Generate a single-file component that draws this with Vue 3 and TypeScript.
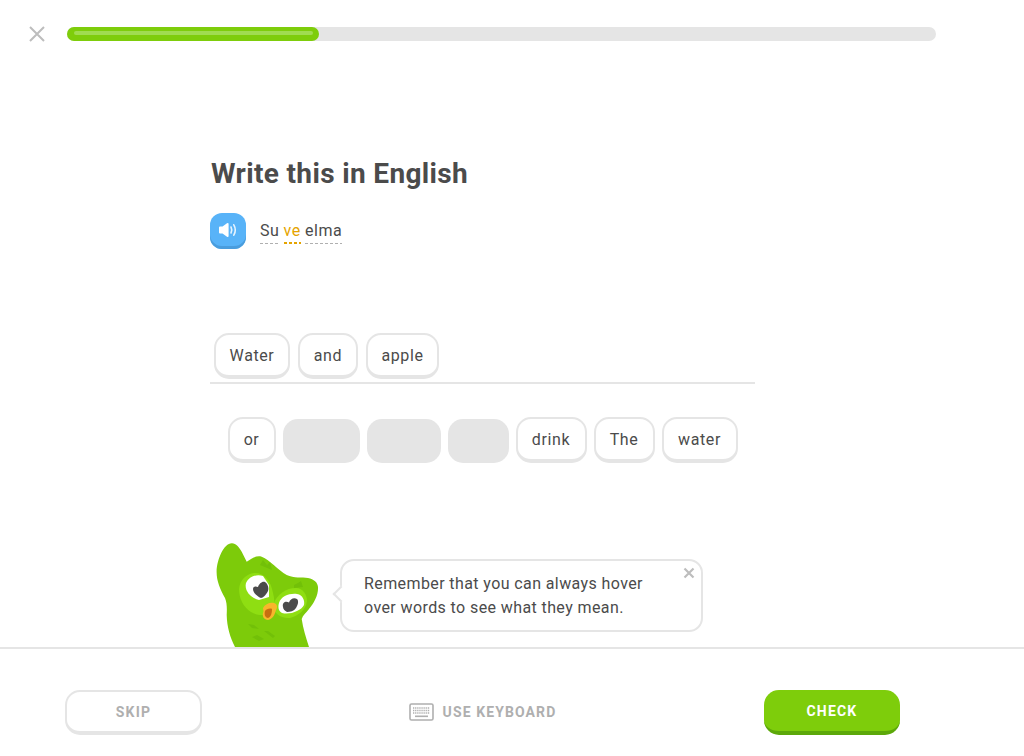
<script setup lang="ts">
interface Word {
  text: string
  width: number
  used?: boolean
}

const answer: Word[] = [
  { text: 'Water', width: 76 },
  { text: 'and', width: 60 },
  { text: 'apple', width: 73 },
]

const bank: Word[] = [
  { text: 'or', width: 48 },
  { text: '', width: 77, used: true },
  { text: '', width: 74, used: true },
  { text: '', width: 61, used: true },
  { text: 'drink', width: 71 },
  { text: 'The', width: 61 },
  { text: 'water', width: 76 },
]
</script>

<template>
  <div class="page">
    <header class="top">
      <svg class="quit" width="16" height="16" viewBox="0 0 16 16">
        <path d="M1 1l14 14M15 1L1 15" stroke="#bdbdbd" stroke-width="2" fill="none" />
      </svg>
      <div class="progress">
        <div class="progress-fill"><span class="progress-shine"></span></div>
      </div>
    </header>

    <main class="lesson">
      <h1 class="title">Write this in English</h1>

      <div class="prompt">
        <button class="speaker">
          <svg width="20" height="16" viewBox="0 0 20 16">
            <path d="M1 5.500q0-1 1-1h2.500L9 1.200q1.600-.9 1.600 1v11.600q0 1.900-1.600 1L4.500 11.500H2q-1 0-1-1z" fill="#fff" />
            <path d="M13 5q1.600 3 0 6M15.800 2.800q3 5.200 0 10.400" stroke="#fff" stroke-width="1.600" stroke-linecap="round" fill="none" opacity=".85" />
          </svg>
        </button>
        <div class="sentence">
          <span class="hint">Su</span>
          <span class="hint new">ve</span>
          <span class="hint">elma</span>
        </div>
      </div>

      <div class="answer">
        <span v-for="w in answer" :key="w.text" class="token" :style="{ width: w.width + 'px' }">{{ w.text }}</span>
      </div>

      <div class="bank">
        <template v-for="(w, i) in bank" :key="i">
          <span v-if="w.used" class="token-empty" :style="{ width: w.width + 'px' }"></span>
          <span v-else class="token" :style="{ width: w.width + 'px' }">{{ w.text }}</span>
        </template>
      </div>

      <div class="tip">
        <svg class="owl" width="103" height="104" viewBox="0 0 103 104">
          <path d="M16 .3C20 .5 23 4 25.700 8.700L30.700 18.700C36 15 41 12 45.700 13.700C54 17 62 27 70.700 32C78 35.500 86 34 92 35C98 36.500 101.500 39 102 44C102.500 52 98 60 93 66C90 70 87 72 85.700 76C87 85 90 95 93 104H19C14 94 11 84 10.700 72C11 65 11 60 9 55C4 46 .5 38 .6 28.700C1 16 8 0 16 .3Z" fill="#7dcb0a" />
          <path d="M44 22l3-5 4 5 3-3 2 8zM78 42l4-2 3-2 2 6-9 1z" fill="#72c008" />
          <path d="M23 46C24 37 30 31 38 30C47 29 55 37 57 50C59 58 59 65 55 69C50 73 42 73 35 69C27 64 23 55 23 46Z" fill="#8fde12" />
          <path d="M57 62C61 51 70 45 80 45C87 45 91 52 91 58C90 67 82 73 74 75C65 76 57 70 57 62Z" fill="#8fde12" />
          <path d="M30 40C33 33 41 31 47 33L53 42V54L43 57C35 55 28 48 30 40Z" fill="#fff" />
          <path d="M63 60C65 53 74 50 81 51C87 52 89 58 88 62C85 68 74 72 66 70C62 68 62 63 63 60Z" fill="#fff" />
          <path d="M37 46C37 43 40 43 42 44C43 41 46 38 49 39C52 41 53 45 52 48C50 52 47 55 45 55C42 54 37 50 37 46Z" fill="#4b4b4b" />
          <path d="M67 64C66 59 70 58 73 59.500C74 56 78 54 81 56C83 58 82 62 80 65C78 68 74 69 71 69C69 68 67 66 67 64Z" fill="#4b4b4b" />
          <path d="M47 65C49 61 54 59 58 60C61 61 62 64 60 67C59 71 57 76 52 77C48 77 46 73 47 70C48 68 47 67 47 65Z" fill="#f8b62c" />
          <path d="M49 68C50 66 54 65 56 66C56 70 55 74 52 75C49 75 48 71 49 68Z" fill="#c76f10" />
          <path d="M32 81l6 1 5 4-7-1zM36 94l5-2 7 4-5 2zM48 88l4 0 7 5-2 2z" fill="#72c008" />
        </svg>

        <div class="bubble">
          <span class="bubble-arrow"></span>
          <p>Remember that you can always hover<br />over words to see what they mean.</p>
          <svg class="bubble-close" width="12" height="12" viewBox="0 0 12 12">
            <path d="M1.500 1.500l9 9M10.500 1.500l-9 9" stroke="#bdbdbd" stroke-width="2.200" fill="none" />
          </svg>
        </div>
      </div>
    </main>

    <footer class="footer">
      <button class="btn skip">SKIP</button>
      <div class="keyboard">
        <svg width="25" height="18" viewBox="0 0 25 18">
          <rect x="1" y="1" width="23" height="16" rx="1.500" fill="none" stroke="#afafaf" stroke-width="1.600" />
          <path d="M4 5h17M4 7.500h17M4 10h17" stroke="#afafaf" stroke-width="1.400" stroke-dasharray="1.300 .8" fill="none" />
          <path d="M6 13.300h13" stroke="#afafaf" stroke-width="1.600" fill="none" />
        </svg>
        <span>USE KEYBOARD</span>
      </div>
      <button class="btn check">CHECK</button>
    </footer>
  </div>
</template>

<style>
body {
  background: #fff;
}
</style>

<style scoped>
.page {
  height: 756px;
  display: flex;
  flex-direction: column;
  font-family: Roboto, 'Noto Sans', sans-serif;
  color: #4b4b4b;
  overflow: hidden;
}

.top {
  display: flex;
  align-items: center;
  gap: 22px;
  padding: 26px 88px 0 29px;
}

.quit {
  flex: none;
}

.progress {
  flex: 1;
  height: 14px;
  border-radius: 7px;
  background: #e5e5e5;
}

.progress-fill {
  width: 252px;
  height: 14px;
  border-radius: 7px;
  background: #7ecd0b;
  padding: 4px 6px 0 7px;
  box-sizing: border-box;
}

.progress-shine {
  display: block;
  height: 4px;
  border-radius: 2px;
  background: #a0dc50;
}

.lesson {
  flex: 1;
  min-height: 0;
  width: 545px;
  margin-left: 210px;
}

.title {
  margin: 114px 0 0 1px;
  font-size: 28px;
  line-height: 36px;
  font-weight: 700;
  letter-spacing: 0.35px;
}

.prompt {
  display: flex;
  align-items: center;
  gap: 14px;
  margin-top: 21px;
}

.speaker {
  width: 36px;
  height: 36px;
  padding: 0 0 3px;
  border: 0;
  border-radius: 12px;
  background: #58b3f8;
  box-shadow: inset 0 -3px 0 #4a9ddd;
  display: flex;
  align-items: center;
  justify-content: center;
}

.sentence {
  display: flex;
  gap: 4px;
  font-size: 16px;
  letter-spacing: 0.6px;
}

.hint {
  line-height: 22px;
  padding: 2px 0 2px;
  background: repeating-linear-gradient(90deg, #afafaf 0 3px, transparent 3px 5px) left bottom / 100% 1px no-repeat;
}

.new {
  color: #e5a400;
  background: repeating-linear-gradient(90deg, #e5a400 0 3px, transparent 3px 5px) left bottom / 100% 2px no-repeat;
}

.answer {
  display: flex;
  gap: 8px;
  height: 49px;
  margin-top: 84px;
  padding-left: 4px;
  border-bottom: 2px solid #e5e5e5;
}

.bank {
  display: flex;
  justify-content: center;
  gap: 7px;
  height: 46px;
  margin-top: 33px;
}

.token,
.token-empty {
  box-sizing: border-box;
  height: 46px;
  border-radius: 15px;
  flex: none;
}

.token {
  display: flex;
  align-items: center;
  justify-content: center;
  border: 2px solid #e5e5e5;
  border-bottom-width: 4px;
  font-size: 16px;
  letter-spacing: 0.6px;
  background: #fff;
}

.token-empty {
  margin-top: 2px;
  height: 44px;
  background: #e5e5e5;
}

.tip {
  display: flex;
  align-items: flex-start;
  gap: 21px;
  margin-top: 80px;
  padding-left: 6px;
}

.owl {
  flex: none;
}

.bubble {
  position: relative;
  box-sizing: border-box;
  width: 363px;
  height: 73px;
  margin-top: 16px;
  padding: 11px 22px;
  border: 2px solid #e5e5e5;
  border-radius: 14px;
  background: #fff;
}

.bubble p {
  margin: 0;
  font-size: 16px;
  line-height: 24px;
  letter-spacing: 0.4px;
}

.bubble-arrow {
  position: absolute;
  left: -7px;
  top: 27px;
  width: 10px;
  height: 10px;
  background: #fff;
  border-left: 2px solid #e5e5e5;
  border-bottom: 2px solid #e5e5e5;
  transform: rotate(45deg);
}

.bubble-close {
  position: absolute;
  top: 6px;
  right: 6px;
}

.footer {
  flex: none;
  box-sizing: border-box;
  height: 109px;
  border-top: 2px solid #e5e5e5;
  padding: 41px 124px 0 65px;
  display: flex;
  justify-content: space-between;
  align-items: flex-start;
}

.btn {
  box-sizing: border-box;
  height: 45px;
  font-family: inherit;
  font-size: 14px;
  font-weight: 700;
  letter-spacing: 1.2px;
}

.skip {
  width: 137px;
  border: 2px solid #e5e5e5;
  border-bottom-width: 4px;
  border-radius: 15px;
  background: #fff;
  color: #afafaf;
}

.check {
  width: 136px;
  border: 0;
  border-bottom: 4px solid #5ca80a;
  border-radius: 15px;
  background: #7ecd0b;
  color: #fff;
}

.keyboard {
  display: flex;
  align-items: center;
  gap: 9px;
  height: 44px;
  margin-right: 1px;
  font-size: 14px;
  font-weight: 700;
  letter-spacing: 1.1px;
  color: #afafaf;
}
</style>
